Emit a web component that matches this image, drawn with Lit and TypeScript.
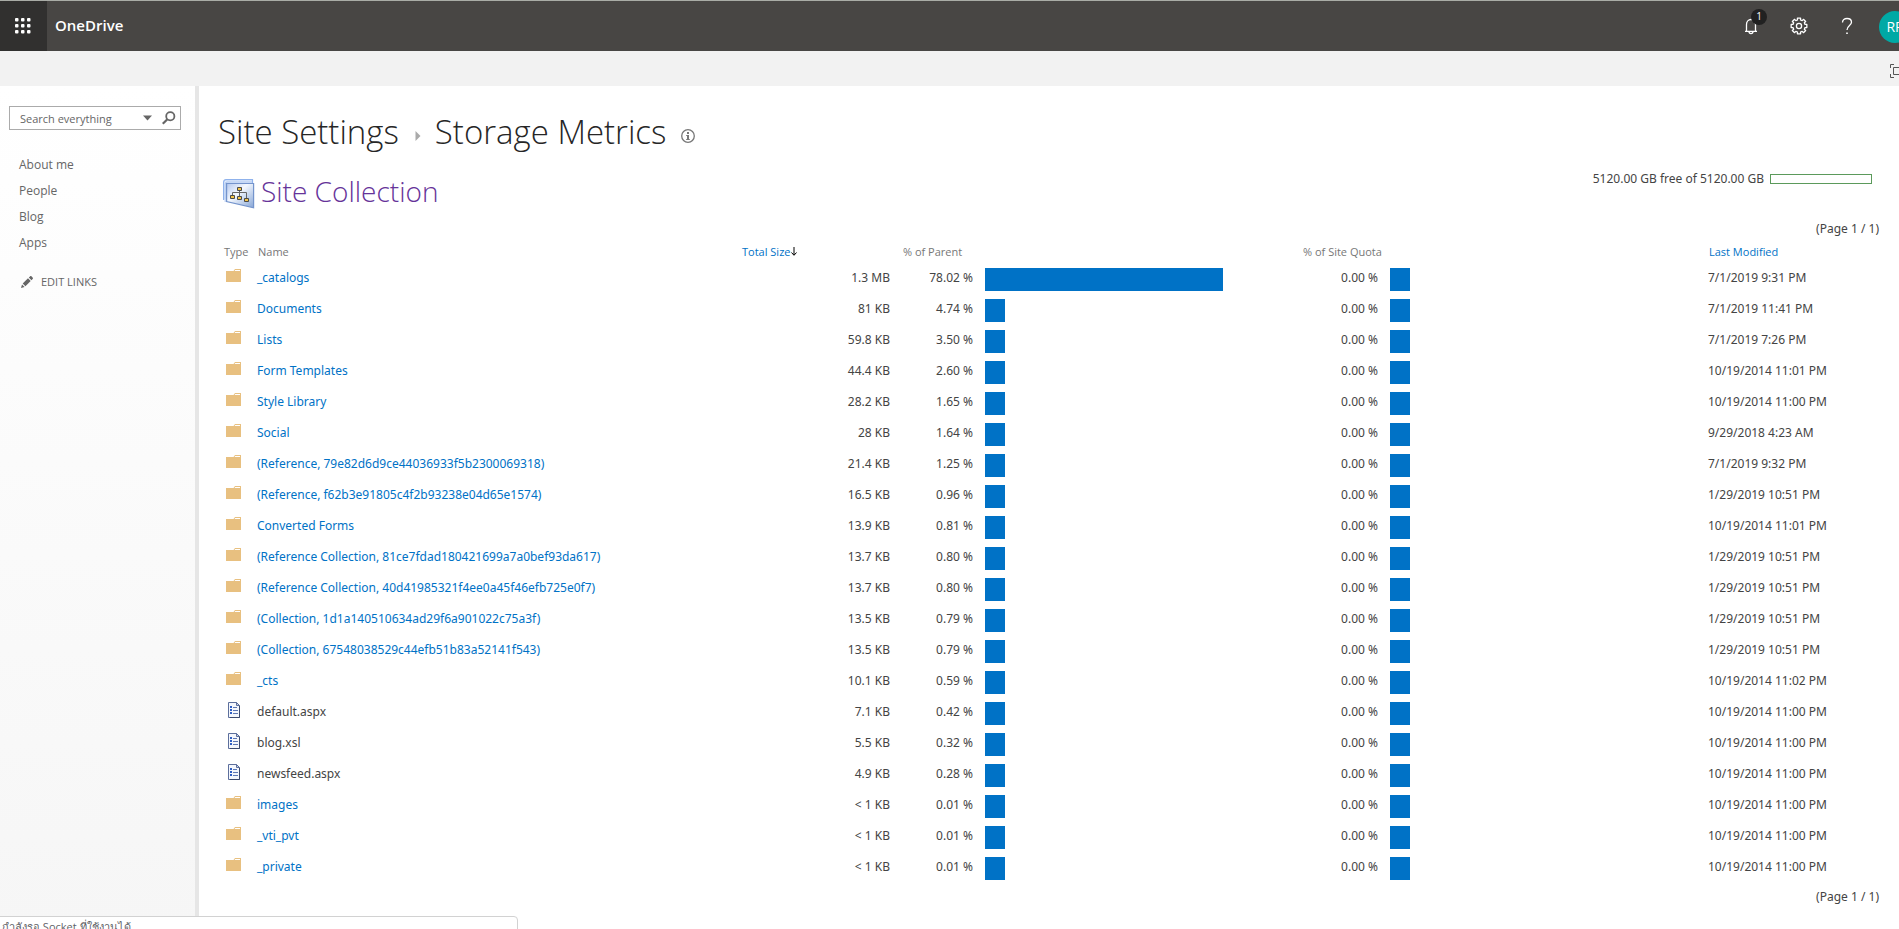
import { LitElement, html, css, svg } from "lit";
import { customElement } from "lit/decorators.js";
import { styleMap } from "lit/directives/style-map.js";

interface Entry {
  kind: "folder" | "file";
  name: string;
  size: string;
  parent: number;
  quota: number;
  modified: string;
}

const folder = (name: string, size: string, parent: number, modified: string): Entry =>
  ({ kind: "folder", name, size, parent, quota: 0, modified });
const file = (name: string, size: string, parent: number, modified: string): Entry =>
  ({ kind: "file", name, size, parent, quota: 0, modified });

const entries: Entry[] = [
  folder("_catalogs", "1.3 MB", 78.02, "7/1/2019 9:31 PM"),
  folder("Documents", "81 KB", 4.74, "7/1/2019 11:41 PM"),
  folder("Lists", "59.8 KB", 3.5, "7/1/2019 7:26 PM"),
  folder("Form Templates", "44.4 KB", 2.6, "10/19/2014 11:01 PM"),
  folder("Style Library", "28.2 KB", 1.65, "10/19/2014 11:00 PM"),
  folder("Social", "28 KB", 1.64, "9/29/2018 4:23 AM"),
  folder("(Reference, 79e82d6d9ce44036933f5b2300069318)", "21.4 KB", 1.25, "7/1/2019 9:32 PM"),
  folder("(Reference, f62b3e91805c4f2b93238e04d65e1574)", "16.5 KB", 0.96, "1/29/2019 10:51 PM"),
  folder("Converted Forms", "13.9 KB", 0.81, "10/19/2014 11:01 PM"),
  folder("(Reference Collection, 81ce7fdad180421699a7a0bef93da617)", "13.7 KB", 0.8, "1/29/2019 10:51 PM"),
  folder("(Reference Collection, 40d41985321f4ee0a45f46efb725e0f7)", "13.7 KB", 0.8, "1/29/2019 10:51 PM"),
  folder("(Collection, 1d1a140510634ad29f6a901022c75a3f)", "13.5 KB", 0.79, "1/29/2019 10:51 PM"),
  folder("(Collection, 67548038529c44efb51b83a52141f543)", "13.5 KB", 0.79, "1/29/2019 10:51 PM"),
  folder("_cts", "10.1 KB", 0.59, "10/19/2014 11:02 PM"),
  file("default.aspx", "7.1 KB", 0.42, "10/19/2014 11:00 PM"),
  file("blog.xsl", "5.5 KB", 0.32, "10/19/2014 11:00 PM"),
  file("newsfeed.aspx", "4.9 KB", 0.28, "10/19/2014 11:00 PM"),
  folder("images", "< 1 KB", 0.01, "10/19/2014 11:00 PM"),
  folder("_vti_pvt", "< 1 KB", 0.01, "10/19/2014 11:00 PM"),
  folder("_private", "< 1 KB", 0.01, "10/19/2014 11:00 PM"),
];

const folderIcon = html`<svg class="glyph" width="16" height="16" viewBox="0 0 16 16" aria-label="Folder">
  <path d="M0 3h7.500l1.500-2h6v13H0z" fill="#e8c080" />
  <path d="M9.200 2h4.800v1H8.600z" fill="#fff" />
</svg>`;

const fileIcon = html`<svg class="glyph" width="16" height="16" viewBox="0 0 16 16" aria-label="File">
  <path d="M2.500.5h8l3 3v12h-11z" fill="#f4f7fd" stroke="#5d6f9c" />
  <path d="M13.500 4v11.500H4" fill="none" stroke="#3b4a6e" />
  <path d="M10.500.5v3h3z" fill="#c9d4ea" stroke="#5d6f9c" />
  <path d="M4 4h2v2H4zM4 7h2v2H4zM4 10h2v2H4z" fill="#2f5fc4" />
  <path d="M7 5.500h4M7 8.500h5M7 11.500h5" stroke="#5d78b5" />
</svg>`;

const gearPath = (() => {
  const pts: string[] = [];
  const teeth = 8;
  for (let i = 0; i < teeth; i++) {
    const mid = (i * 2 * Math.PI) / teeth - Math.PI / 2;
    for (const [r, off] of [[6.2, -0.25], [8, -0.2], [8, 0.2], [6.2, 0.25]]) {
      pts.push(`${(9 + r * Math.cos(mid + off)).toFixed(2)} ${(9 + r * Math.sin(mid + off)).toFixed(2)}`);
    }
  }
  return `M${pts.join("L")}Z`;
})();

@customElement("app-root")
export class AppRoot extends LitElement {
  static styles = css`
    :host {
      display: flex;
      flex-direction: column;
      height: 100vh;
      overflow: hidden;
      position: relative;
      background: #fff;
      color: #444;
      font: 12px/20px "Open Sans", "Noto Sans", sans-serif;
    }
    * { box-sizing: border-box; }
    a { color: #0072c6; text-decoration: none; }
    button { border: 0; padding: 0; background: none; color: inherit; font: inherit; cursor: pointer; }
    svg { display: block; flex: none; }

    .suite {
      display: flex;
      align-items: stretch;
      flex: none;
      height: 51px;
      border-top: 1px solid #a9aca6;
      background: #484644;
      color: #fff;
      overflow: hidden;
    }
    .launcher { width: 47px; background: #31302f; display: grid; place-items: center; padding: 0 2px 1px 0; }
    .brand { color: #fff; font-size: 15px; font-weight: 600; padding: 14px 8px 0; flex: 1; }
    .tool { width: 48px; flex: none; display: grid; place-items: center; position: relative; }
    .badge {
      position: absolute;
      left: 24px;
      top: 8px;
      width: 16px;
      height: 16px;
      border-radius: 8px;
      background: #212121;
      font-size: 10px;
      line-height: 15px;
      text-align: center;
    }
    .avatar-slot { width: 28px; flex: none; padding: 10px 0 0 8px; }
    .avatar {
      width: 32px;
      height: 32px;
      border-radius: 16px;
      background: #00a9a5;
      font-size: 14px;
      text-align: center;
      display: block;
    }

    .ribbon {
      flex: none;
      height: 35px;
      background: #f2f2f2;
      display: flex;
      justify-content: flex-end;
      align-items: center;
      overflow: hidden;
    }
    .focus { width: 9px; overflow: hidden; padding-top: 5px; }

    .body { display: flex; flex: 1; min-height: 0; }
    .side {
      width: 199px;
      flex: none;
      border-right: 4px solid #e6e6e6;
      background: linear-gradient(#fff, #f6f6f6);
      padding: 20px 14px 0 9px;
    }
    .search {
      display: flex;
      align-items: center;
      height: 24px;
      border: 1px solid #ababab;
      background: #fff;
      padding-right: 4px;
      gap: 10px;
    }
    .search input {
      flex: 1;
      min-width: 0;
      border: 0;
      outline: 0;
      padding: 1px 0 0 10px;
      background: none;
      color: #666;
      font: inherit;
      font-size: 11px;
    }
    .search input::placeholder { color: #666; opacity: 1; }
    .nav { list-style: none; margin: 22px 0 0; padding: 0 0 0 10px; }
    .nav li { padding: 3px 0; }
    .nav a { color: #666; display: block; }
    .edit { display: flex; align-items: center; gap: 8px; margin: 16px 0 0 12px; color: #666; font-size: 11px; }

    .main { flex: 1; min-width: 0; padding: 24px 20px 0 19px; }
    .title { display: flex; align-items: center; margin: 0; font-size: 33px; line-height: 44px; font-weight: 300; color: #262626; }
    .title a { color: inherit; }
    .crumb { margin: 7px 14px 0 16px; }
    .info { margin: 7px 0 0 15px; }
    .scope { display: flex; align-items: flex-start; margin-top: 15px; }
    .scope-title { display: flex; align-items: center; gap: 6px; margin: 0; padding: 4px 0 0 5px; font-size: 28px; line-height: 36px; font-weight: 300; }
    .scope-title svg { margin-top: 5px; }
    .scope-title a { color: #663399; }
    .quota { margin-left: auto; display: flex; align-items: center; gap: 6px; padding-right: 7px; }
    .meter { width: 102px; height: 10px; border: 1px solid #5b9a5b; }
    .quota, .pager, tbody { font-family: "Noto Sans", "Open Sans", sans-serif; }
    .pager { text-align: right; padding-top: 3px; }
    .pager.top { padding-top: 10px; }

    table { width: 100%; border-collapse: collapse; table-layout: fixed; }
    th { font-weight: 400; font-size: 11px; text-align: left; color: #777; padding: 3px 0 0; height: 25px; vertical-align: top; white-space: nowrap; }
    td { padding: 4px 0; height: 31px; vertical-align: top; white-space: nowrap; }
    .c-type { width: 39px; }
    .c-size { width: 148px; }
    .c-pct { width: 95px; }
    .c-pbar { width: 305px; }
    .c-quota { width: 100px; }
    .c-qbar { width: 318px; }
    .c-mod { width: 171px; }
    th.type { padding-left: 6px; }
    th.pct { padding-left: 13px; }
    th.name { padding-left: 1px; }
    th.mod { padding-left: 1px; }
    .sort { display: inline-flex; align-items: center; gap: 1px; }
    td.icon { padding-left: 8px; }
    td.num { text-align: right; }
    td.pct { text-align: right; padding-right: 12px; }
    .bar { height: 23px; min-width: 20px; background: #0072c6; }

    .status {
      position: absolute;
      left: -1px;
      bottom: -1px;
      width: 519px;
      height: 14px;
      overflow: hidden;
      border: 1px solid #d2d2d2;
      border-radius: 0 4px 0 0;
      background: #fff;
      color: #5f6368;
      padding: 1px 2px;
      font-size: 11px;
      line-height: 18px;
      white-space: nowrap;
    }
  `;

  private row(e: Entry) {
    return html`<tr>
      <td class="icon">${e.kind === "folder" ? folderIcon : fileIcon}</td>
      <td>${e.kind === "folder" ? html`<a href="#">${e.name}</a>` : e.name}</td>
      <td class="num">${e.size}</td>
      <td class="pct">${e.parent.toFixed(2)} %</td>
      <td><div class="bar" style=${styleMap({ width: `${e.parent}%` })}></div></td>
      <td class="pct">${e.quota.toFixed(2)} %</td>
      <td><div class="bar" style=${styleMap({ width: `${e.quota}%` })}></div></td>
      <td>${e.modified}</td>
    </tr>`;
  }

  render() {
    return html`
      <header class="suite">
        <button class="launcher" aria-label="App launcher">
          <svg width="16" height="16" viewBox="0 0 16 16" fill="#fff">
            ${[0, 6, 12].map((y) => [0, 6, 12].map((x) => svg`<rect x=${x} y=${y} width="3.500" height="3.500" rx="1" />`))}
          </svg>
        </button>
        <a class="brand" href="#">OneDrive</a>
        <button class="tool" aria-label="Notifications">
          <svg width="16" height="18" viewBox="0 0 16 18" fill="none" stroke="#fff" stroke-width="1.300">
            <path d="M2 14.300h12M3.500 14V7.500a4.500 5 0 0 1 9 0V14M6 14.600a2 2 0 0 0 4 0" />
          </svg>
          <span class="badge">1</span>
        </button>
        <button class="tool" aria-label="Settings">
          <svg width="18" height="18" viewBox="0 0 18 18" fill="none" stroke="#fff" stroke-width="1.300" stroke-linejoin="round">
            <path d=${gearPath} /><circle cx="9" cy="9" r="2.600" />
          </svg>
        </button>
        <button class="tool" aria-label="Help">
          <svg width="12" height="18" viewBox="0 0 12 18" fill="none" stroke="#fff" stroke-width="1.300">
            <path d="M1.500 5.500C1.500 3 3.500 1.500 6 1.500s4.500 1.500 4.500 3.800C10.500 8.500 6 8.700 6 13" />
            <path d="M5.200 15.500h1.600v1.600H5.200z" fill="#fff" stroke="none" />
          </svg>
        </button>
        <div class="avatar-slot"><button class="avatar">RP</button></div>
      </header>
      <div class="ribbon">
        <button class="focus" aria-label="Focus on content">
          <svg width="19" height="14" viewBox="0 0 19 14" fill="none" stroke="#555">
            <path d="M4 .5H.5V4M.5 10v3.500H4M15 .5h3.500V4M18.500 10v3.500H15M3.500 3.500h12v7h-12z" />
          </svg>
        </button>
      </div>
      <div class="body">
        <nav class="side">
          <form class="search" role="search">
            <input type="text" placeholder="Search everything" aria-label="Search everything" />
            <button type="button" aria-label="Search scope">
              <svg width="9" height="6" viewBox="0 0 9 6"><path d="M0 .5h9L4.500 5.500z" fill="#666" /></svg>
            </button>
            <button type="button" aria-label="Search">
              <svg width="14" height="14" viewBox="0 0 14 14" fill="none" stroke="#666">
                <circle cx="8.300" cy="5.200" r="4.100" stroke-width="1.800" />
                <path d="M5.400 8.300.8 12.800" stroke-width="2.200" />
              </svg>
            </button>
          </form>
          <ul class="nav">
            ${["About me", "People", "Blog", "Apps"].map((t) => html`<li><a href="#">${t}</a></li>`)}
          </ul>
          <button class="edit">
            <svg width="12" height="12" viewBox="0 0 12 12" fill="#666">
              <path d="M0 12l1-3.600L3.600 11zM1.700 7.600 7 2.300 9.700 5 4.400 10.300zM7.800 1.500 9 .4c.5-.5 1.200-.4 1.600 0l1 1c.5.500.5 1.100 0 1.600l-1.100 1.200z" />
            </svg>
            EDIT LINKS
          </button>
        </nav>
        <main class="main">
          <h1 class="title">
            <a href="#">Site Settings</a>
            <svg class="crumb" width="6" height="10" viewBox="0 0 6 10"><path d="M.5 0 5.500 5 .5 10z" fill="#aaa" /></svg>
            <span>Storage Metrics</span>
            <svg class="info" width="14" height="14" viewBox="0 0 14 14">
              <circle cx="7" cy="7" r="6.300" fill="none" stroke="#777" stroke-width="1.300" />
              <path d="M6 3h2v2H6zM5.200 6H8v4h.8v1H5.200v-1H6V7h-.8z" fill="#777" />
            </svg>
          </h1>
          <div class="scope">
            <h2 class="scope-title">
              <svg width="32" height="30" viewBox="0 0 32 30">
                <defs>
                  <linearGradient id="sheet" x1="0" y1="0" x2="1" y2="1">
                    <stop offset="0" stop-color="#b4c8ee" /><stop offset=".4" stop-color="#f4f8fe" /><stop offset="1" stop-color="#86a5d6" />
                  </linearGradient>
                </defs>
                <path d="M.6 21V3.500Q.6.700 3 .7h26.500V4" fill="#e4eefc" stroke="#8fb2ec" stroke-width="1.200" />
                <path d="M2.200 23V5Q2.200 3 4 3h25" fill="none" stroke="#a8c2ee" />
                <path d="M3.600 4.500h27v24.300l-27-6.300z" fill="url(#sheet)" stroke="#7494cc" stroke-width="1.200" />
                <path d="M16.500 11v7M9.500 17v-3.500h14V20" fill="none" stroke="#666" />
                <path d="M14.500 8.500h4v3h-4zM7.500 16.500h4v3h-4zM14.500 17.500h4v3h-4zM21.500 19.500h4v3h-4z" fill="#f3c548" stroke="#4a4a4a" />
              </svg>
              <a href="#">Site Collection</a>
            </h2>
            <div class="quota">
              <span>5120.00 GB free of 5120.00 GB</span>
              <div class="meter" role="img" aria-label="Storage used"></div>
            </div>
          </div>
          <div class="pager top">(Page 1 / 1)</div>
          <table>
            <colgroup>
              <col class="c-type" /><col /><col class="c-size" /><col class="c-pct" />
              <col class="c-pbar" /><col class="c-quota" /><col class="c-qbar" /><col class="c-mod" />
            </colgroup>
            <thead>
              <tr>
                <th class="type">Type</th>
                <th class="name">Name</th>
                <th>
                  <a class="sort" href="#">Total Size<svg width="6" height="10" viewBox="0 0 6 10" fill="none" stroke="#000"><path d="M3 0v8M.5 5.500 3 8.300l2.500-2.800" /></svg></a>
                </th>
                <th class="pct" colspan="2">% of Parent</th>
                <th class="pct" colspan="2">% of Site Quota</th>
                <th class="mod"><a href="#">Last Modified</a></th>
              </tr>
            </thead>
            <tbody>${entries.map((e) => this.row(e))}</tbody>
          </table>
          <div class="pager">(Page 1 / 1)</div>
        </main>
      </div>
      <div class="status" role="status">กำลังรอ Socket ที่ใช้งานได้</div>
    `;
  }
}
